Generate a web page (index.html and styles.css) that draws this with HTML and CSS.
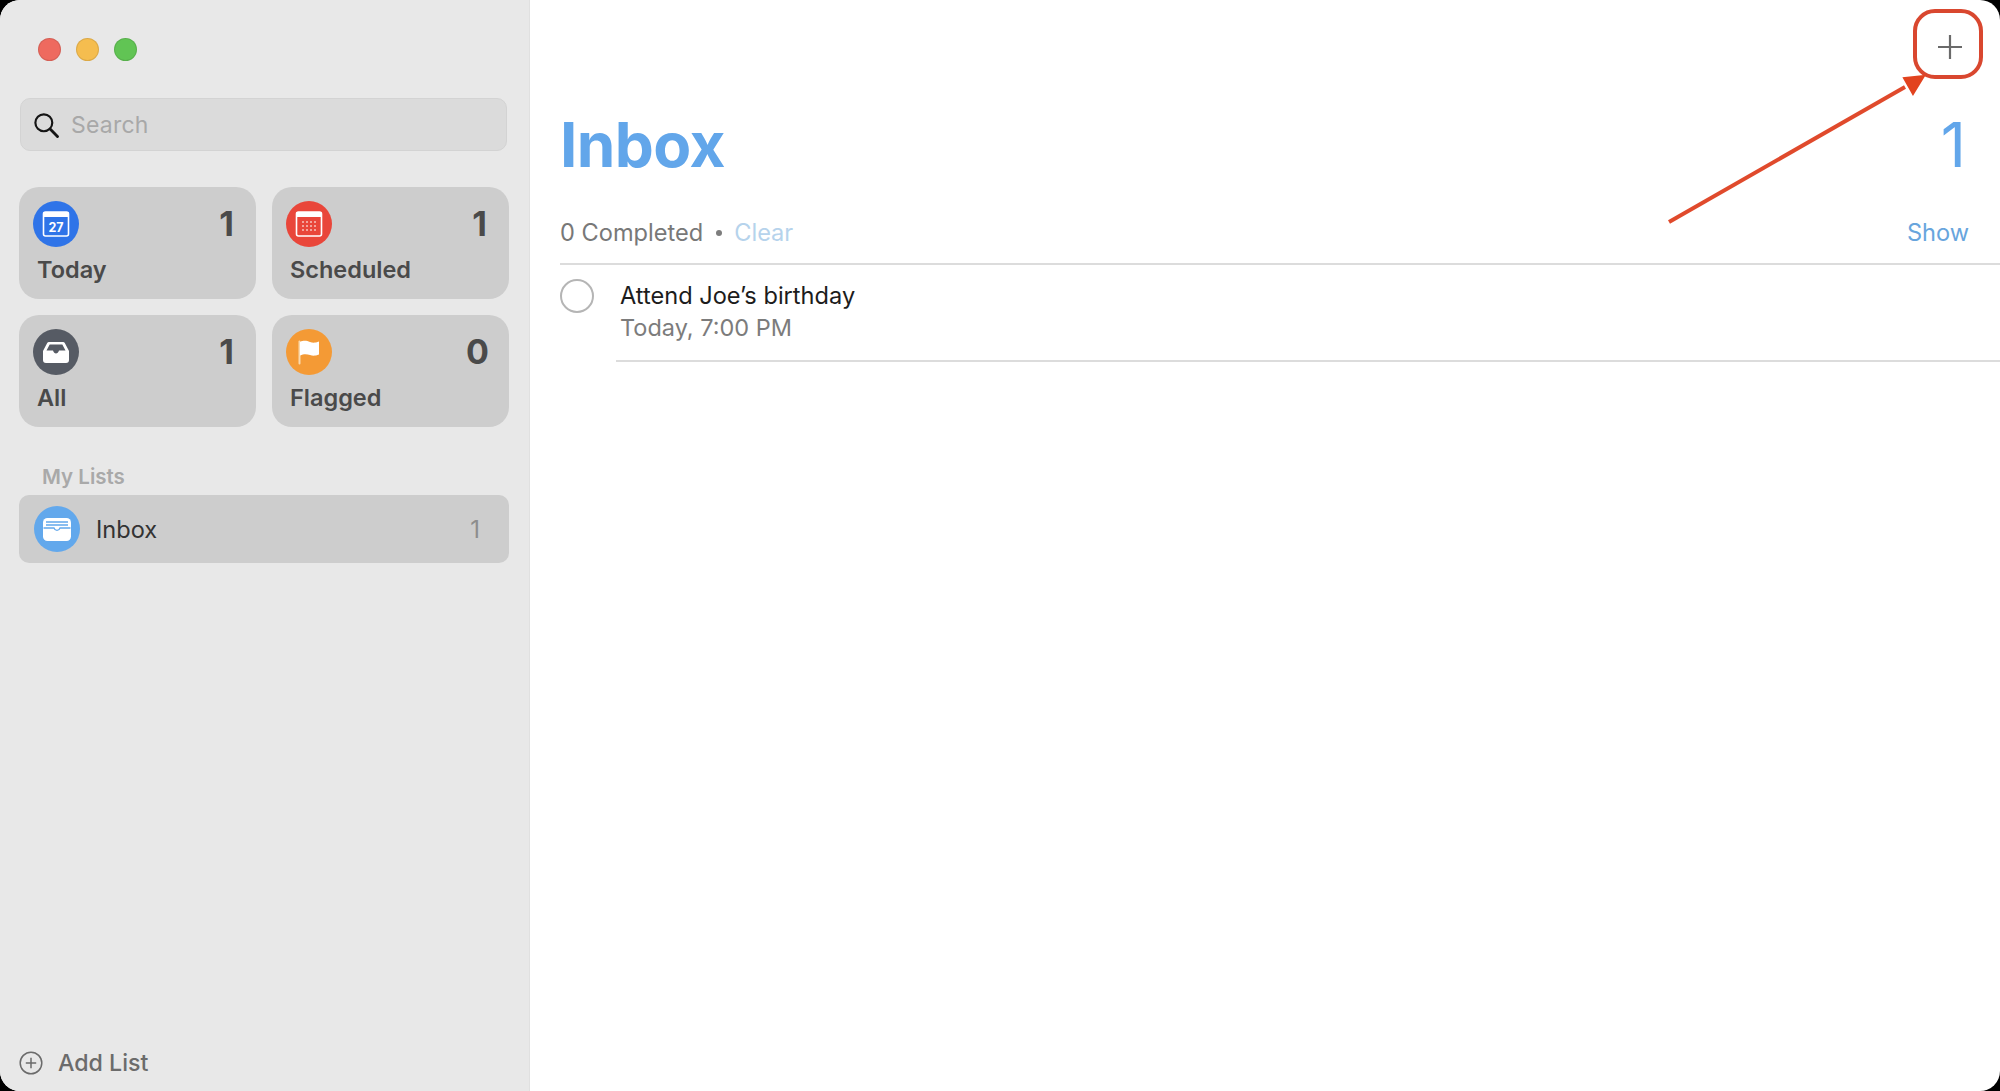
FILE: index.html
```html
<!DOCTYPE html>
<html lang="en">
<head>
<meta charset="utf-8">
<title>Reminders</title>
<link rel="stylesheet" href="styles.css">
</head>
<body>
<div class="window">
  <aside class="sidebar">
    <div class="traffic">
      <span class="light red"></span><span class="light yellow"></span><span class="light green"></span>
    </div>
    <div class="search">
      <svg class="search-icon" viewBox="0 0 24 24" width="26" height="26"><circle cx="10" cy="10" r="7.8" fill="none" stroke="#151515" stroke-width="2"/><path d="M15.8 15.8L22.6 22.6" stroke="#151515" stroke-width="2.6" stroke-linecap="round"/></svg>
      <span class="search-text">Search</span>
    </div>
    <div class="cards">
      <div class="card">
        <div class="card-top">
          <span class="badge blue"><svg viewBox="0 0 46 46" width="46" height="46"><rect x="10.5" y="11" width="25" height="24" rx="2" fill="none" stroke="#fff" stroke-width="1.6"/><rect x="10.5" y="11" width="25" height="5" fill="#fff"/><text x="23" y="30.5" class="cal-num">27</text></svg></span>
          <span class="count">1</span>
        </div>
        <div class="card-label">Today</div>
      </div>
      <div class="card">
        <div class="card-top">
          <span class="badge redbg"><svg viewBox="0 0 46 46" width="46" height="46"><rect x="10.5" y="11" width="25" height="24" rx="2" fill="none" stroke="#fff" stroke-width="1.6"/><rect x="10.5" y="11" width="25" height="5" fill="#fff"/><g fill="#f6c3bc"><circle cx="17" cy="21" r="1"/><circle cx="21" cy="21" r="1"/><circle cx="25" cy="21" r="1"/><circle cx="29" cy="21" r="1"/><circle cx="17" cy="25" r="1"/><circle cx="21" cy="25" r="1"/><circle cx="25" cy="25" r="1"/><circle cx="29" cy="25" r="1"/><circle cx="17" cy="29" r="1"/><circle cx="21" cy="29" r="1"/><circle cx="25" cy="29" r="1"/><circle cx="29" cy="29" r="1"/></g></svg></span>
          <span class="count">1</span>
        </div>
        <div class="card-label">Scheduled</div>
      </div>
      <div class="card">
        <div class="card-top">
          <span class="badge slate"><svg viewBox="0 0 46 46" width="46" height="46"><path d="M16 13h14a2 2 0 0 1 1.8 1.1L36 22v9a3 3 0 0 1-3 3H13a3 3 0 0 1-3-3v-9l4.200-7.900A2 2 0 0 1 16 13z" fill="#fff"/><path d="M13.500 21.500l3.200-6h12.600l3.200 6h-6.500c-.5 2-1.900 3-3 3s-2.500-1-3-3z" fill="#565b64"/></svg></span>
          <span class="count">1</span>
        </div>
        <div class="card-label">All</div>
      </div>
      <div class="card">
        <div class="card-top">
          <span class="badge orange"><svg viewBox="0 0 46 46" width="46" height="46"><path d="M13.500 12.500v22" stroke="#f9d9ae" stroke-width="2" stroke-linecap="round"/><path d="M14 13c4-2 7-1 10 0s5 1 9-.5v13c-4 1.500-6 1.500-9 .5s-6-1.500-10 .5z" fill="#fff"/></svg></span>
          <span class="count count-zero">0</span>
        </div>
        <div class="card-label">Flagged</div>
      </div>
    </div>
    <div class="section-title">My Lists</div>
    <div class="list-row">
      <span class="badge sky"><svg viewBox="0 0 46 46" width="46" height="46"><rect x="9" y="12" width="28" height="23" rx="4.500" fill="#fff"/><path d="M12 16h22M12 19h22" stroke="#62a8ec" stroke-width="1.300"/><path d="M9.500 22h10.500c.5 1.500 1.800 2.300 3 2.300s2.500-.8 3-2.300h10.500" fill="none" stroke="#62a8ec" stroke-width="1.300"/></svg></span>
      <span class="list-name">Inbox</span>
      <span class="list-count">1</span>
    </div>
    <div class="add-list">
      <svg viewBox="0 0 24 24" width="24" height="24"><circle cx="12" cy="12" r="10.800" fill="none" stroke="#6b6b6b" stroke-width="1.500"/><path d="M12 6.800v10.400M6.800 12h10.400" stroke="#6b6b6b" stroke-width="1.500"/></svg>
      <span>Add List</span>
    </div>
  </aside>
  <main class="main">
    <div class="toolbar">
      <svg class="plus" viewBox="0 0 26 26" width="26" height="26"><path d="M13 1v24M1 13h24" stroke="#6a6a6a" stroke-width="2.200"/></svg>
    </div>
    <div class="title-row">
      <h1>Inbox</h1>
      <span class="title-count">1</span>
    </div>
    <div class="completed-row">
      <span class="completed">0 Completed</span>
      <span class="dot"></span>
      <span class="clear">Clear</span>
      <span class="show">Show</span>
    </div>
    <div class="reminder">
      <span class="check"></span>
      <div class="reminder-body">
        <div class="reminder-title">Attend Joe’s birthday</div>
        <div class="reminder-date">Today, 7:00 PM</div>
      </div>
    </div>
  </main>
</div>
<div class="callout-box"></div>
<svg class="callout-arrow" viewBox="0 0 2000 1091" width="2000" height="1091">
  <path d="M1669 222L1905 87" stroke="#e04a2c" stroke-width="4" fill="none"/>
  <path d="M1924 76L1904 78L1913 94Z" fill="#e2431f" stroke="#e2431f" stroke-width="2"/>
</svg>
</body>
</html>
```
FILE: styles.css
```css
* { box-sizing: border-box; margin: 0; padding: 0; }
html, body { width: 2000px; height: 1091px; overflow: hidden; background: #000; }
body { font-family: Inter, "Liberation Sans", sans-serif; position: relative; }

.window {
  display: flex;
  width: 2000px;
  height: 1091px;
  border-radius: 20px;
  overflow: hidden;
  background: #fff;
}

.sidebar {
  width: 530px;
  flex: none;
  background: #e8e8e8;
  border-right: 1px solid #e0e0e0;
  padding: 0 20px 0 19px;
  display: flex;
  flex-direction: column;
}

.traffic { display: flex; gap: 15px; padding: 38px 0 0 19px; height: 98px; }
.light { width: 23px; height: 23px; border-radius: 50%; border: 1px solid rgba(0,0,0,.1); }
.red { background: #ee6a5f; }
.yellow { background: #f5bd4f; }
.green { background: #61c454; }

.search {
  height: 53px;
  margin: 0 2px 0 1px;
  background: #dbdbdb;
  border: 1px solid #d3d3d3;
  border-radius: 10px;
  display: flex;
  align-items: center;
  padding-left: 12px;
  gap: 12px;
}
.search-text { font-size: 23px; color: #a8a8a8; letter-spacing: .2px; }

.cards {
  margin-top: 36px;
  display: grid;
  grid-template-columns: 237px 237px;
  grid-auto-rows: 112px;
  gap: 16px 16px;
}
.card {
  background: #cdcdcd;
  border-radius: 20px;
  padding: 14px 22px 0 14px;
}
.card-top { display: flex; justify-content: space-between; align-items: flex-start; }
.badge { width: 46px; height: 46px; border-radius: 50%; flex: none; display: block; }
.badge svg { display: block; }
.blue { background: #2f74e8; }
.redbg { background: #e9463a; }
.slate { background: #565b64; }
.orange { background: #f49a35; }
.sky { background: #62a8ec; }
.cal-num { font: 700 12.5px Inter, sans-serif; fill: #fff; text-anchor: middle; }

.count { font-size: 34px; font-weight: 700; color: #4a4a4a; line-height: 46px; }
.count-zero { margin-right: -2px; }
.card-label { font-size: 23.5px; font-weight: 600; color: #4a4a4a; margin-top: 7px; line-height: 32px; padding-left: 4px; }

.section-title { font-size: 20.5px; font-weight: 600; color: #a9a9a9; margin: 37px 0 0 23px; line-height: 26px; }

.list-row {
  margin-top: 5px;
  height: 68px;
  background: #cdcdcd;
  border-radius: 10px;
  display: flex;
  align-items: center;
  padding: 0 29px 0 15px;
}
.list-name { font-size: 23.6px; color: #333; margin-left: 16px; flex: 1; }
.list-count { font-size: 24px; color: #8d8d8d; }

.add-list {
  margin-top: auto;
  margin-bottom: 16px;
  display: flex;
  align-items: center;
  gap: 15px;
  font-size: 23.2px;
  font-weight: 500;
  color: #6b6b6b;
  line-height: 24px;
}

.main { flex: 1; min-width: 0; padding-left: 30px; display: flex; flex-direction: column; }

.toolbar { height: 98px; display: flex; justify-content: flex-end; padding: 34px 37px 0 0; }
.plus { display: block; }

.title-row { display: flex; justify-content: space-between; align-items: center; height: 94px; padding-right: 34px; }
h1 { font-size: 62px; font-weight: 700; color: #62a6ea; line-height: 94px; letter-spacing: -.6px; }
.title-count { font-size: 62px; font-weight: 400; color: #62a6ea; line-height: 94px; }

.completed-row {
  height: 73px;
  padding: 9px 31px 0 0;
  display: flex;
  align-items: center;
  border-bottom: 2px solid #dcdcdc;
  font-size: 23.6px;
}
.completed { color: #787878; }
.dot { width: 6px; height: 6px; border-radius: 50%; background: #7d7d7d; margin: 2px 12px 0 13px; }
.clear { color: #b6d3ec; }
.show { margin-left: auto; color: #68a5dd; }

.reminder { display: flex; align-items: flex-start; }
.check { width: 34px; height: 34px; border: 2px solid #b5b5b5; border-radius: 50%; margin-top: 14px; flex: none; }
.reminder-body { flex: 1; margin-left: 22px; padding: 15px 0 16px 4px; border-bottom: 2px solid #dcdcdc; }
.reminder-title { font-size: 23.6px; color: #1c1c1c; line-height: 32px; }
.reminder-date { font-size: 23.5px; color: #7c7c7c; line-height: 32px; }

.callout-box {
  position: absolute;
  left: 1913px;
  top: 9px;
  width: 70px;
  height: 70px;
  border: 4px solid #d9472f;
  border-radius: 22px;
}
.callout-arrow { position: absolute; left: 0; top: 0; pointer-events: none; }
```
